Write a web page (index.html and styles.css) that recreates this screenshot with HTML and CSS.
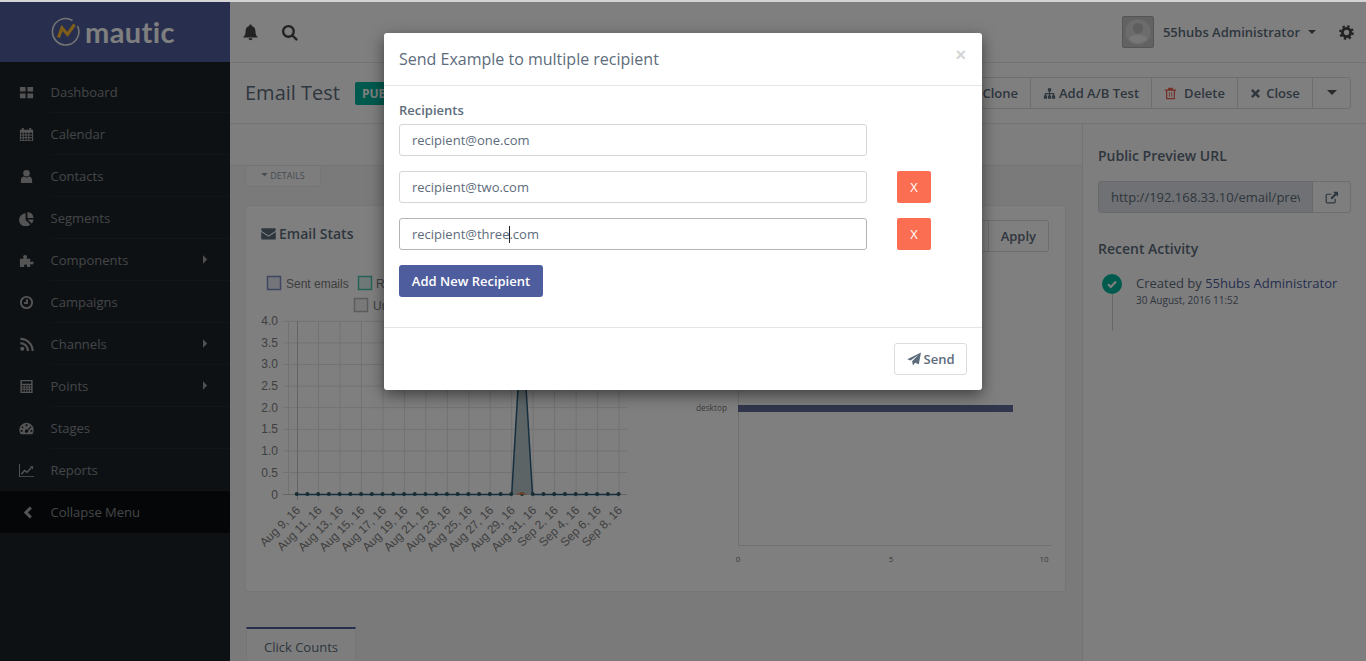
FILE: index.html
```html
<!DOCTYPE html>
<html>
<head>
	<meta charset="utf-8">
	<title>Email Test | Mautic</title>
	<link rel="stylesheet" href="styles.css">
</head>
<body>
	<svg class="defs" width="0" height="0">
		<symbol id="i-dash" viewBox="0 0 16 16"><path d="M1 2h6v5H1zM9 2h6v5H9zM1 9h6v5H1zM9 9h6v5H9z"/></symbol>
		<symbol id="i-cal" viewBox="0 0 16 16"><path fill-rule="evenodd" d="M1 3h2V1h2v2h6V1h2v2h2v12H1zM2 6v2h2V6zm3 0v2h2V6zm3 0v2h2V6zm3 0v2h3V6zM2 9v2h2V9zm3 0v2h2V9zm3 0v2h2V9zm3 0v2h3V9zM2 12v2h2v-2zm3 0v2h2v-2zm3 0v2h2v-2zm3 0v2h3v-2z"/></symbol>
		<symbol id="i-user" viewBox="0 0 16 16"><circle cx="8" cy="4.500" r="3.500"/><path d="M2 15v-3c0-2.400 1.600-4 3.500-4 .8.700 1.600 1 2.500 1s1.700-.3 2.500-1c1.900 0 3.500 1.600 3.500 4v3z"/></symbol>
		<symbol id="i-pie" viewBox="0 0 16 16"><path d="M7 2.500v7l5 5A7 7 0 1 1 7 2.500z"/><path d="M9 1a6.500 6.500 0 0 1 6.500 6.500H9z"/><path d="M9 9h6.500a7 7 0 0 1-2 4.300z"/></symbol>
		<symbol id="i-puzzle" viewBox="0 0 16 16"><path d="M1 6h3.500c.5 0 .6-.5.2-1-.8-1 0-3 1.800-3s2.600 2 1.800 3c-.4.5-.3 1 .2 1H12v3.300c0 .5.500.6 1 .2.800-.7 2.500-.3 2.500 1.200s-1.700 2-2.500 1.200c-.5-.4-1-.3-1 .2V15H8.500v-1.500c0-1.500-3-1.500-3 0V15H1z"/></symbol>
		<symbol id="i-clock" viewBox="0 0 16 16"><path fill="none" stroke="currentColor" stroke-width="2" d="M8 2a6 6 0 1 1 0 12A6 6 0 0 1 8 2zM8.500 4.500v4H5.500"/></symbol>
		<symbol id="i-rss" viewBox="0 0 16 16"><circle cx="3.500" cy="12.500" r="2.200"/><path fill="none" stroke="currentColor" stroke-width="2.300" d="M1.500 6.500a8 8 0 0 1 8 8.500M1.500 2a12.800 12.800 0 0 1 13 13"/></symbol>
		<symbol id="i-calc" viewBox="0 0 16 16"><path fill-rule="evenodd" d="M1.500 1h13v14h-13zM3 2.500v2.500h10V2.500zM3 6.500v1.500h2V6.500zm3 0v1.500h2V6.500zm3 0v1.500h1.500V6.500zm2.500 0v1.500H13V6.500zM3 9v1.500h2V9zm3 0v1.500h2V9zm3 0v1.500h1.500V9zm2.500 0v1.500H13V9zM3 11.500V13.500h2v-2zm3 0V13.500h2v-2zm3 0V13.500h1.500v-2zm2.500 0V13.500H13v-2z"/></symbol>
		<symbol id="i-gauge" viewBox="0 0 16 16"><path fill-rule="evenodd" d="M8 2a7.500 7.500 0 0 1 7 10.500l-.8 1.500H1.800L1 12.500A7.500 7.500 0 0 1 8 2zM7 3.500v2h2v-2zM3.500 5.500l-1 1 1.500 1.500 1-1zm9 0L8.800 9.200a1.800 1.800 0 1 0 .9.900l3.800-3.600zM1.800 9.500v2h2v-2zm10.400 0v2h2v-2z"/></symbol>
		<symbol id="i-line" viewBox="0 0 16 16"><path d="M0 1h1v13h15v1H0z"/><path fill="none" stroke="currentColor" stroke-width="1.500" d="M2.500 12l3.500-4 2.500 2 4.500-5"/><path d="M11.500 3.500h3.500v3.500z"/></symbol>
		<symbol id="i-left" viewBox="0 0 16 16"><path d="M11.500 1.500l2.300 2.300L9.500 8l4.300 4.200-2.300 2.300L5 8z"/></symbol>
		<symbol id="i-right" viewBox="0 0 6 10"><path d="M0 0l5 5-5 5z"/></symbol>
		<symbol id="i-down" viewBox="0 0 10 6"><path d="M0 0h10L5 5z"/></symbol>
		<symbol id="i-bell" viewBox="0 0 16 16"><path d="M8 .5c.8 0 1.300.6 1.200 1.400 2.300.5 3.400 2.400 3.400 4.800 0 3.300 1 4.800 2.400 6H1c1.400-1.200 2.400-2.700 2.400-6 0-2.400 1.100-4.300 3.400-4.800C6.700 1.100 7.200.5 8 .5zM6.200 13.500h3.600a1.800 1.800 0 0 1-3.600 0z"/></symbol>
		<symbol id="i-search" viewBox="0 0 16 16"><path fill="none" stroke="currentColor" stroke-width="2.200" stroke-linecap="round" d="M7 2a5 5 0 1 1 0 10A5 5 0 0 1 7 2zM10.800 10.800l3.700 3.700"/></symbol>
		<symbol id="i-cog" viewBox="0 0 16 16"><circle cx="8" cy="8" r="4.400" fill="none" stroke="currentColor" stroke-width="3"/><circle cx="8" cy="8" r="6.600" fill="none" stroke="currentColor" stroke-width="2.400" stroke-dasharray="2.600 2.580"/></symbol>
		<symbol id="i-mail" viewBox="0 0 16 16"><path d="M1.500 2.500h13c.8 0 1.300.6 1.300 1.300 0 .7-.4 1.200-1 1.700L8 10 1.200 5.500C.6 5 .2 4.500.2 3.800c0-.7.500-1.300 1.300-1.300z"/><path d="M.2 6.500L8 11.500l7.800-5v6.700c0 .7-.6 1.300-1.300 1.300h-13c-.7 0-1.300-.6-1.300-1.300z"/></symbol>
		<symbol id="i-sitemap" viewBox="0 0 16 16"><path d="M6 1.500h4v4H8.600v2h5.200v3H15v4h-4v-4h1.200V9H8.600v1.500H10v4H6v-4h1.400V9H3.800v1.500H5v4H1v-4h1.200v-3h5.200v-2H6z"/></symbol>
		<symbol id="i-trash" viewBox="0 0 16 16"><path fill-rule="evenodd" d="M5.500 1h5l1 2H15v1.500h-1.500V15h-11V4.500H1V3h3.500zM4 4.500V13.500h8V4.500zM6 6h1v6H6zm3 0h1v6H9z"/></symbol>
		<symbol id="i-times" viewBox="0 0 16 16"><path d="M4 1.500l4 4 4-4L14.500 4l-4 4 4 4-2.500 2.500-4-4-4 4L1.500 12l4-4-4-4z"/></symbol>
		<symbol id="i-ext" viewBox="0 0 16 16"><path fill="none" stroke="currentColor" stroke-width="1.500" d="M12.500 9.500v3.700c0 .7-.5 1.300-1.300 1.300H2.800c-.7 0-1.300-.6-1.300-1.300V5.300c0-.8.600-1.300 1.300-1.300h5"/><path d="M10 1h6v6l-2-2-5.500 5.500-1.800-1.800L12 3z"/></symbol>
		<symbol id="i-plane" viewBox="0 0 16 16"><path d="M16 .5L13.500 14l-4.300-1.800-2.400 3.100-1-4.800L13 3.500 4 9.800.3 8.200z"/></symbol>
	</svg>

	<div class="edge"></div>
	<div class="app">
		<aside class="sidebar">
			<div class="brand">
				<svg class="logo" width="30" height="30" viewBox="0 0 30 30">
					<path class="logo-ring" d="M21.500 3.500A13.200 13.200 0 1 0 26.500 9"/>
					<path class="logo-m" d="M7.500 20.500l3.500-9.500 5.500 6.500 7-10"/>
				</svg>
				<span class="wordmark">mautic</span>
			</div>
			<ul class="menu">
				<li><svg class="ico"><use href="#i-dash"/></svg><span class="lbl">Dashboard</span></li>
				<li><svg class="ico"><use href="#i-cal"/></svg><span class="lbl">Calendar</span></li>
				<li><svg class="ico"><use href="#i-user"/></svg><span class="lbl">Contacts</span></li>
				<li><svg class="ico"><use href="#i-pie"/></svg><span class="lbl">Segments</span></li>
				<li><svg class="ico"><use href="#i-puzzle"/></svg><span class="lbl">Components<svg class="arr"><use href="#i-right"/></svg></span></li>
				<li><svg class="ico"><use href="#i-clock"/></svg><span class="lbl">Campaigns</span></li>
				<li><svg class="ico"><use href="#i-rss"/></svg><span class="lbl">Channels<svg class="arr"><use href="#i-right"/></svg></span></li>
				<li><svg class="ico"><use href="#i-calc"/></svg><span class="lbl">Points<svg class="arr"><use href="#i-right"/></svg></span></li>
				<li><svg class="ico"><use href="#i-gauge"/></svg><span class="lbl">Stages</span></li>
				<li><svg class="ico"><use href="#i-line"/></svg><span class="lbl">Reports</span></li>
				<li class="collapse"><svg class="ico"><use href="#i-left"/></svg><span class="lbl">Collapse Menu</span></li>
			</ul>
		</aside>

		<div class="main">
			<header class="topbar">
				<svg class="top-ico"><use href="#i-bell"/></svg>
				<svg class="top-ico"><use href="#i-search"/></svg>
				<div class="account">
					<svg class="avatar" width="32" height="32" viewBox="0 0 32 32">
						<circle class="av-ring" cx="16" cy="16" r="13.500"/>
						<circle class="av-head" cx="16" cy="12" r="5.500"/>
						<path class="av-body" d="M6 23c2-3 5-4 10-4s8 1 10 4c-2 3-6 5-10 5s-8-2-10-5z"/>
					</svg>
					<span class="acc-name">55hubs Administrator</span>
					<svg class="caret"><use href="#i-down"/></svg>
				</div>
				<svg class="top-ico cog"><use href="#i-cog"/></svg>
			</header>

			<div class="pagehead">
				<h1 class="pagetitle">Email Test</h1>
				<span class="badge">PUBLISHED</span>
				<div class="btn-group">
					<span class="btn">Clone</span>
					<span class="btn btn-ab"><svg class="b-ico"><use href="#i-sitemap"/></svg>Add A/B Test</span>
					<span class="btn btn-del"><svg class="b-ico red"><use href="#i-trash"/></svg>Delete</span>
					<span class="btn btn-close"><svg class="b-ico"><use href="#i-times"/></svg>Close</span>
					<span class="btn btn-more"><svg class="caret"><use href="#i-down"/></svg></span>
				</div>
			</div>

			<div class="content">
				<section class="left">
					<div class="stripe"></div>
					<div class="details-tab"><svg class="tab-caret"><use href="#i-down"/></svg>DETAILS</div>
					<div class="card">
						<div class="card-head">
							<h3 class="card-title"><svg class="b-ico mail"><use href="#i-mail"/></svg>Email Stats</h3>
							<div class="range">
								<span class="range-field"></span>
								<span class="btn">Apply</span>
							</div>
						</div>
						<div class="charts">
							<svg class="chart" width="400" height="326" viewBox="246 265 400 326">
								<g class="legend">
									<rect class="lg-blue" x="267.500" y="276.500" width="13" height="13"/>
									<text x="286" y="288">Sent emails</text>
									<rect class="lg-green" x="358.500" y="276.500" width="13" height="13"/>
									<text x="376" y="288">Read</text>
									<rect class="lg-grey" x="354.500" y="298.500" width="13" height="13"/>
									<text x="373" y="310">Unsubscribed</text>
								</g>
								<path class="grid" d="M283 321.300H627M283 342.900H627M283 364.500H627M283 386.100H627M283 407.700H627M283 429.300H627M283 450.900H627M283 472.500H627M288.500 321V495M318.500 321V500M340 321V500M361.400 321V500M382.900 321V500M404.400 321V500M425.800 321V500M447.300 321V500M468.800 321V500M490.200 321V500M511.700 321V500M533.200 321V500M554.600 321V500M576.100 321V500M597.600 321V500M619 321V500"/>
								<path class="axis" d="M297.500 321V500M283 494.500H627"/>
								<path class="spike" d="M511.700 494.500L522 321L532.500 494.500z"/>
								<path class="series" d="M296.700 494.500H511.700L522 321L532.500 494.500H618.700"/>
								<path class="dots" d="M296.700 494H619"/>
								<path class="tri" d="M515 494.500L521.700 492L528 494.500z"/>
								<g class="y-labels">
									<text x="278" y="325">4.0</text>
									<text x="278" y="347">3.5</text>
									<text x="278" y="368">3.0</text>
									<text x="278" y="390">2.5</text>
									<text x="278" y="412">2.0</text>
									<text x="278" y="433">1.5</text>
									<text x="278" y="455">1.0</text>
									<text x="278" y="477">0.5</text>
									<text x="278" y="499">0</text>
								</g>
								<g class="x-labels" transform="translate(1 2)">
									<text transform="rotate(-45 300 509)" x="300" y="509">Aug 9, 16</text>
									<text transform="rotate(-45 321.500 509)" x="321.500" y="509">Aug 11, 16</text>
									<text transform="rotate(-45 343 509)" x="343" y="509">Aug 13, 16</text>
									<text transform="rotate(-45 364.400 509)" x="364.400" y="509">Aug 15, 16</text>
									<text transform="rotate(-45 385.900 509)" x="385.900" y="509">Aug 17, 16</text>
									<text transform="rotate(-45 407.400 509)" x="407.400" y="509">Aug 19, 16</text>
									<text transform="rotate(-45 428.800 509)" x="428.800" y="509">Aug 21, 16</text>
									<text transform="rotate(-45 450.300 509)" x="450.300" y="509">Aug 23, 16</text>
									<text transform="rotate(-45 471.800 509)" x="471.800" y="509">Aug 25, 16</text>
									<text transform="rotate(-45 493.200 509)" x="493.200" y="509">Aug 27, 16</text>
									<text transform="rotate(-45 514.700 509)" x="514.700" y="509">Aug 29, 16</text>
									<text transform="rotate(-45 536.200 509)" x="536.200" y="509">Aug 31, 16</text>
									<text transform="rotate(-45 557.600 509)" x="557.600" y="509">Sep 2, 16</text>
									<text transform="rotate(-45 579.100 509)" x="579.100" y="509">Sep 4, 16</text>
									<text transform="rotate(-45 600.600 509)" x="600.600" y="509">Sep 6, 16</text>
									<text transform="rotate(-45 622 509)" x="622" y="509">Sep 8, 16</text>
								</g>
							</svg>
							<svg class="chart" width="419" height="326" viewBox="646 265 419 326">
								<path class="hbar-axis" d="M738.500 280V545.500H1051"/>
								<rect class="hbar" x="738" y="405" width="275" height="7"/>
								<text class="hbar-label" x="727" y="411">desktop</text>
								<g class="hbar-ticks">
									<text x="738" y="562">0</text>
									<text x="891" y="562">5</text>
									<text x="1044" y="562">10</text>
								</g>
							</svg>
						</div>
					</div>
					<div class="tab-active">Click Counts</div>
				</section>

				<aside class="right">
					<h4 class="side-title">Public Preview URL</h4>
					<div class="url-group">
						<input class="url-field" type="text" readonly value="http://192.168.33.10/email/preview/1">
						<span class="url-btn"><svg class="b-ico"><use href="#i-ext"/></svg></span>
					</div>
					<h4 class="side-title recent">Recent Activity</h4>
					<div class="activity">
						<div class="rail">
							<span class="dot"><svg viewBox="0 0 12 12" width="12" height="12"><path d="M2 6.200l2.800 2.800L10 3.500"/></svg></span>
							<span class="rail-line"></span>
						</div>
						<div class="act-text">
							<div>Created by <span class="link">55hubs Administrator</span></div>
							<div class="act-date">30 August, 2016 11:52</div>
						</div>
					</div>
				</aside>
			</div>
		</div>
	</div>

	<div class="backdrop"></div>

	<div class="modal">
		<div class="modal-head">
			<h4 class="modal-title">Send Example to multiple recipient</h4>
			<span class="modal-x">×</span>
		</div>
		<div class="modal-body">
			<label class="field-label">Recipients</label>
			<div class="rcpt-row"><input class="rcpt" type="text" value="recipient@one.com"></div>
			<div class="rcpt-row"><input class="rcpt" type="text" value="recipient@two.com"><button class="btn-x">X</button></div>
			<div class="rcpt-row">
				<div class="rcpt-wrap">
					<input class="rcpt focus" type="text" value="recipient@three.com">
					<span class="text-caret"></span>
				</div>
				<button class="btn-x">X</button>
			</div>
			<button class="btn-add">Add New Recipient</button>
		</div>
		<div class="modal-foot">
			<button class="btn-send"><svg class="b-ico"><use href="#i-plane"/></svg>Send</button>
		</div>
	</div>
</body>
</html>
```

FILE: styles.css
```css
* {
	box-sizing: border-box;
}

html, body {
	margin: 0;
	height: 661px;
	overflow: hidden;
}

body {
	font-family: "Open Sans", sans-serif;
	font-size: 13px;
	color: #5d6c7c;
	background: #f5f5f5;
}

.defs {
	position: absolute;
}

.edge {
	height: 2px;
	background: #d4d4d4;
}

.app {
	display: flex;
	height: 659px;
}

/* sidebar */
.sidebar {
	width: 230px;
	flex: none;
	background: #1d2329;
}

.brand {
	height: 60px;
	background: #4e5d9d;
	display: flex;
	align-items: center;
	padding-left: 51px;
}

.logo-ring {
	fill: none;
	stroke: #e6e6e6;
	stroke-width: 1.600;
}

.logo-m {
	fill: none;
	stroke: #fdb933;
	stroke-width: 3.200;
}

.wordmark {
	font-family: "Lato", sans-serif;
	font-weight: 700;
	font-size: 29px;
	letter-spacing: .4px;
	line-height: 30px;
	color: #fff;
	margin-left: 4px;
}

.menu {
	list-style: none;
	margin: 9px 0 0;
	padding: 0;
}

.menu li {
	height: 42px;
	display: flex;
	align-items: center;
	padding-left: 19px;
	color: #888c90;
}

.ico {
	width: 15px;
	height: 15px;
	margin-right: 16.500px;
	flex: none;
	fill: #a8a8a8;
	color: #a8a8a8;
}

.lbl {
	flex: 1;
	height: 42px;
	line-height: 42px;
	display: flex;
	justify-content: space-between;
	align-items: center;
	padding-right: 22px;
	border-bottom: 1px solid #232a31;
}

.arr {
	width: 5px;
	height: 9px;
	fill: #a0a0a0;
}

.menu .collapse {
	background: #0a0c0f;
}

.collapse .lbl {
	border-bottom: 0;
}

/* top */
.main {
	flex: 1;
	display: flex;
	flex-direction: column;
	min-width: 0;
}

.topbar {
	height: 61px;
	flex: none;
	background: #fff;
	border-bottom: 1px solid #e6e6e6;
	display: flex;
	align-items: center;
	padding: 0 12px 0 12px;
	color: #333;
}

.top-ico {
	width: 17px;
	height: 17px;
	fill: #444;
	color: #444;
	margin-right: 22px;
}

.account {
	margin-left: auto;
	display: flex;
	align-items: center;
	margin-right: 23px;
}

.avatar {
	background: #c4c4c4;
	border: 1px solid #aaa;
	border-radius: 2px;
}

.av-ring {
	fill: #d8d8d8;
}

.av-head {
	fill: #bdbdbd;
}

.av-body {
	fill: #eee;
}

.acc-name {
	margin-left: 9px;
	font-weight: 600;
	color: #5d6c7c;
}

.caret {
	width: 8px;
	height: 5px;
	margin-left: 8px;
	fill: #555;
}

.cog {
	margin-right: 0;
	width: 15px;
	height: 15px;
}

.pagehead {
	height: 61px;
	flex: none;
	background: #fff;
	border-bottom: 1px solid #e6e6e6;
	display: flex;
	align-items: center;
	padding: 0 15px;
}

.pagetitle {
	margin: 0 0 1px;
	font-size: 20px;
	font-weight: 400;
}

.badge {
	margin-left: 15px;
	height: 23px;
	line-height: 23px;
	padding: 0 7px;
	border-radius: 2px;
	background: #00b49c;
	color: #fff;
	font-size: 12px;
	font-weight: 700;
}

.btn-group {
	margin-left: auto;
	display: flex;
	border: 1px solid #ddd;
	border-radius: 3px;
	height: 32px;
	background: #fff;
}

.btn {
	display: flex;
	align-items: center;
	justify-content: center;
	height: 30px;
	padding: 0 12px;
	font-weight: 600;
	border-left: 1px solid #ddd;
	white-space: nowrap;
}

.btn:first-child {
	border-left: 0;
}

.btn-ab {
	width: 121px;
	padding: 0;
}

.btn-del {
	width: 86px;
	padding: 0;
}

.btn-close {
	width: 75px;
	padding: 0;
}

.b-ico {
	width: 13px;
	height: 13px;
	fill: currentColor;
	color: inherit;
	flex: none;
}

.btn-ab .b-ico {
	margin-right: 3px;
}

.btn-del .b-ico {
	margin-right: 7px;
}

.red {
	color: #e8604a;
}

.btn-close .b-ico {
	margin-right: 5px;
	width: 11px;
	height: 11px;
}

.btn-more {
	width: 38px;
	padding: 0;
}

.btn-more .caret {
	margin-left: 0;
	width: 10px;
	height: 6px;
}

/* content */
.content {
	flex: 1;
	display: flex;
	min-height: 0;
}

.left {
	flex: 1;
	min-width: 0;
	background: #f5f5f5;
}

.stripe {
	height: 42px;
	background: #fdfdfd;
	border-bottom: 1px solid #e8e8e8;
}

.details-tab {
	width: 76px;
	height: 21px;
	margin-left: 15px;
	padding-bottom: 2px;
	background: #fafafa;
	border: 1px solid #eaeaea;
	border-top: 0;
	border-radius: 0 0 3px 3px;
	display: flex;
	align-items: center;
	justify-content: center;
	font-size: 9px;
	color: #8c99a6;
}

.tab-caret {
	width: 7px;
	height: 4px;
	margin-right: 2px;
	fill: #8c99a6;
}

.card {
	margin: 18px 16px 0 15px;
	height: 387px;
	background: #fff;
	border: 1px solid #ececec;
	border-radius: 3px;
}

.card-head {
	display: flex;
	align-items: flex-start;
	justify-content: space-between;
	height: 59px;
	padding: 14px 16px 0 15px;
}

.card-title {
	margin: 0;
	height: 26px;
	font-size: 14px;
	font-weight: 600;
	display: flex;
	align-items: center;
}

.mail {
	width: 15px;
	height: 15px;
	margin-right: 3px;
}

.range {
	display: flex;
	border: 1px solid #ddd;
	border-radius: 3px;
	border-left: 0;
}

.range-field {
	width: 200px;
}

.charts {
	display: flex;
}

.chart {
	display: block;
	flex: none;
}

.legend text, .y-labels text, .x-labels text {
	font-family: "Liberation Sans", sans-serif;
	font-size: 12px;
	fill: #808080;
}

.lg-blue, .lg-green, .lg-grey {
	stroke-width: 1.500;
}

.lg-blue {
	fill: #e8ebf5;
	stroke: #7f8dc6;
}

.lg-green {
	fill: #dff3ef;
	stroke: #4fc4ae;
}

.lg-grey {
	fill: #f2f2f2;
	stroke: #b8b8b8;
}

.grid {
	fill: none;
	stroke: #e4e4e4;
}

.axis {
	fill: none;
	stroke: #c6c6c6;
}

.spike {
	fill: #b8c8cc;
}

.series {
	fill: none;
	stroke: #2a5f80;
	stroke-width: 1.500;
}

.dots {
	fill: none;
	stroke: #2f5a66;
	stroke-width: 4;
	stroke-linecap: round;
	stroke-dasharray: 0 10.730;
}

.tri {
	fill: #e8854a;
}

.y-labels text, .x-labels text {
	text-anchor: end;
}

.hbar-axis {
	fill: none;
	stroke: #e0e0e0;
}

.hbar {
	fill: #626c98;
}

.hbar-label {
	font-size: 8.300px;
	text-anchor: end;
	fill: #777;
}

.hbar-ticks text {
	font-size: 8px;
	text-anchor: middle;
	fill: #777;
}

.tab-active {
	margin: 35px 0 0 16px;
	width: 110px;
	height: 60px;
	padding-top: 9px;
	text-align: center;
	background: #fafafa;
	border: 1px solid #eaeaea;
	border-top: 2px solid #4e5d9d;
}

.right {
	width: 284px;
	flex: none;
	background: #fdfdfd;
	border-left: 1px solid #e6e6e6;
	padding: 0 15px;
}

.side-title {
	margin: 22px 0 15px;
	font-size: 14px;
	line-height: 20px;
	font-weight: 600;
}

.side-title.recent {
	margin: 26px 0 15px;
}

.url-group {
	display: flex;
	height: 32px;
}

.url-field {
	flex: 1;
	min-width: 0;
	border: 1px solid #d3d3d3;
	border-radius: 3px 0 0 3px;
	background: #dfe3e8;
	padding: 0 12px;
	font: 13px "Open Sans", sans-serif;
	color: #5d6c7c;
}

.url-btn {
	width: 38px;
	border: 1px solid #ddd;
	border-left: 0;
	border-radius: 0 3px 3px 0;
	display: flex;
	align-items: center;
	justify-content: center;
}

.activity {
	display: flex;
	margin-left: 4px;
}

.rail {
	width: 20px;
	display: flex;
	flex-direction: column;
	align-items: center;
	margin-right: 14px;
}

.dot {
	width: 20px;
	height: 20px;
	border-radius: 50%;
	background: #00b49c;
	display: flex;
	align-items: center;
	justify-content: center;
}

.dot path {
	fill: none;
	stroke: #fff;
	stroke-width: 2.200;
}

.rail-line {
	width: 1px;
	height: 37px;
	background: #cfcfcf;
}

.act-text {
	line-height: 18px;
}

.act-date {
	font-size: 10px;
	line-height: 16px;
}

.link {
	color: #4e5d9d;
}

/* modal */
.backdrop {
	position: absolute;
	left: 0;
	right: 0;
	top: 2px;
	bottom: 0;
	background: rgba(0, 0, 0, .5);
}

.modal {
	position: absolute;
	left: 384px;
	top: 33px;
	width: 598px;
	height: 357px;
	background: #fff;
	border-radius: 3px;
	box-shadow: 0 5px 15px rgba(0, 0, 0, .5);
}

.modal-head {
	height: 53px;
	padding: 0 15px;
	border-bottom: 1px solid #e5e5e5;
	display: flex;
	align-items: center;
	justify-content: space-between;
}

.modal-title {
	margin: 0;
	font-size: 16px;
	font-weight: 400;
}

.modal-x {
	font-family: "Liberation Sans", sans-serif;
	font-size: 18px;
	font-weight: 700;
	line-height: 21px;
	color: #d4d4d4;
	margin: -8px 1px 0 0;
}

.modal-body {
	padding: 15px 15px 30px;
	height: 242px;
	border-bottom: 1px solid #e5e5e5;
}

.field-label {
	display: block;
	font-weight: 600;
	line-height: 18px;
	margin-bottom: 5px;
}

.rcpt-row {
	display: flex;
	align-items: flex-start;
	gap: 30px;
	margin-bottom: 15px;
	height: 32px;
}

.rcpt-wrap {
	position: relative;
	height: 32px;
}

.rcpt {
	display: block;
	width: 468px;
	height: 32px;
	padding: 0 12px;
	border: 1px solid #d5d5d5;
	border-radius: 3px;
	font: 13px "Open Sans", sans-serif;
	color: #5d6c7c;
	outline: 0;
}

.rcpt.focus {
	border-color: #b4b4b4;
}

.text-caret {
	position: absolute;
	left: 110px;
	top: 8px;
	width: 1px;
	height: 17px;
	background: #222;
}

.btn-x {
	width: 34px;
	height: 32px;
	border: 0;
	border-radius: 2px;
	background: #fc6e51;
	color: #fff;
	font: 13px "Open Sans", sans-serif;
	padding: 0;
}

.btn-add {
	display: block;
	height: 32px;
	width: 144px;
	padding: 0;
	border: 0;
	border-radius: 3px;
	background: #4e5d9d;
	color: #fff;
	font: 600 13px "Open Sans", sans-serif;
}

.modal-foot {
	padding: 15px;
	display: flex;
	justify-content: flex-end;
}

.btn-send {
	width: 73px;
	height: 32px;
	background: #fff;
	border: 1px solid #ddd;
	border-radius: 3px;
	color: #5d6c7c;
	font: 600 13px "Open Sans", sans-serif;
	display: flex;
	align-items: center;
	justify-content: center;
	padding: 0;
}

.btn-send .b-ico {
	width: 14px;
	height: 14px;
	margin-right: 3px;
}
```
